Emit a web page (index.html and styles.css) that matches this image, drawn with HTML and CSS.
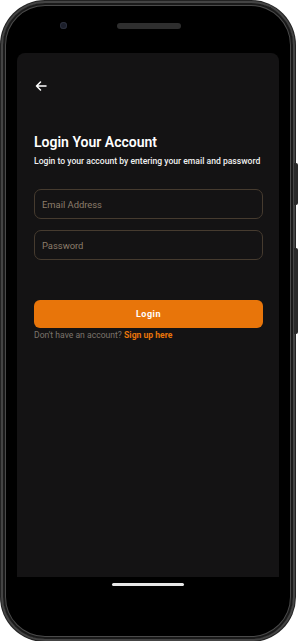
FILE: index.html
```html
<!DOCTYPE html>
<html>
<head>
<meta charset="utf-8">
<link rel="stylesheet" href="styles.css">
</head>
<body>
<div class="phone">
  <span class="side-btn side-btn-1"></span>
  <span class="side-btn side-btn-2"></span>
  <div class="top-bezel">
    <span class="camera"></span>
    <span class="speaker"></span>
  </div>
  <div class="screen">
    <div class="back">
      <svg width="12" height="10" viewBox="0 0 12 10"><path d="M11 5H1.5M5.5 1L1.5 5l4 4" fill="none" stroke="#fff" stroke-width="1.5" stroke-linecap="round" stroke-linejoin="round"/></svg>
    </div>
    <h1 class="title">Login Your Account</h1>
    <p class="subtitle">Login to your account by entering your email and password</p>
    <div class="field">Email Address</div>
    <div class="field field-2">Password</div>
    <button class="login">Login</button>
    <p class="signup">Don't have an account? <span class="link">Sign up here</span></p>
  </div>
  <div class="bottom-bezel">
    <span class="home"></span>
  </div>
</div>
</body>
</html>
```
FILE: styles.css
```css
* { box-sizing: border-box; }
html, body { margin: 0; padding: 0; background: #fff; }
body { padding: 1px 0 0 1px; font-family: Roboto, "Noto Sans", sans-serif; }

.phone {
  position: relative;
  width: 294px;
  height: 640px;
  background: #000;
  border-radius: 44px;
  border: 2px solid #444;
  box-shadow: inset 0 0 0 2px #1a1a1a, inset 0 0 0 3px #4a4a4a, 0 0 0 1px #222;
  display: flex;
  flex-direction: column;
}

.side-btn {
  position: absolute;
  right: -5px;
  width: 4px;
  background: #2a2a2a;
  border-radius: 0 2px 2px 0;
}
.side-btn-1 { top: 160px; height: 42px; }
.side-btn-2 { top: 245px; height: 86px; }

.top-bezel {
  height: 50px;
  display: flex;
  align-items: flex-start;
  padding-top: 19px;
}
.camera {
  width: 7px;
  height: 7px;
  border-radius: 50%;
  background: #1b1e2a;
  box-shadow: inset 0 0 0 1px #2b2f3c;
  margin-left: 57px;
}
.speaker {
  width: 64px;
  height: 6px;
  border-radius: 3px;
  background: #2e2e2e;
  margin-left: 50px;
  margin-top: 1px;
}

.screen {
  margin: 0 14px;
  height: 524px;
  background: #141314;
  border-radius: 8px 8px 0 0;
  padding: 28px 16px 0 17px;
  color: #fff;
}

.back { height: 10px; margin-left: 1px; }
.back svg { display: block; }

.title {
  margin: 42px 0 0;
  font-size: 14px;
  font-weight: 600;
  line-height: 18px;
}
.subtitle {
  margin: 4px 0 0;
  font-size: 8.6px;
  font-weight: 500;
  line-height: 12px;
  color: #f0f0f0;
}

.field {
  margin-top: 22px;
  height: 30px;
  border: 1px solid #463b2f;
  border-radius: 7px;
  padding: 0 7px;
  display: flex;
  align-items: center;
  font-size: 9.4px;
  color: #8c7d6b;
}
.field-2 { margin-top: 11px; }

.login {
  display: block;
  width: 100%;
  margin-top: 40px;
  height: 28px;
  border: 0;
  border-radius: 6px;
  background: #e8750a;
  color: #fff;
  font-family: Roboto, "Noto Sans", sans-serif;
  font-size: 9px;
  font-weight: 700;
  letter-spacing: 0.5px;
}

.signup {
  margin: 1px 0 0;
  font-size: 8.6px;
  line-height: 12px;
  color: #7c746c;
}
.link { color: #e8750a; font-weight: 700; }

.bottom-bezel {
  flex: 1;
  display: flex;
  justify-content: center;
  padding-top: 6px;
}
.home {
  width: 72px;
  height: 3px;
  border-radius: 2px;
  background: #e8e8e8;
}
```
